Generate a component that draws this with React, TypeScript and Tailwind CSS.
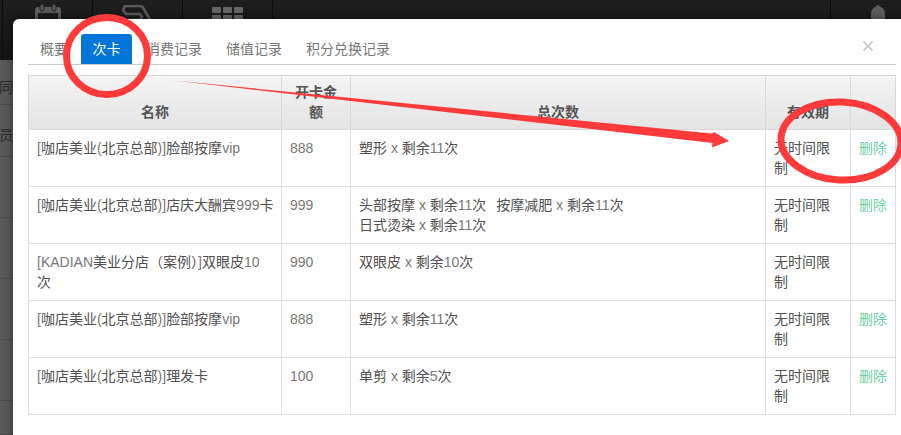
const cjk = "font-['Liberation_Sans','Noto_Sans_CJK_SC',sans-serif]";

type Row = { name: string; amount: string; items: string[][]; del: boolean };
const rows: Row[] = [
  { name: "[咖店美业(北京总部)]脸部按摩vip", amount: "888", items: [["塑形 x 剩余11次"]], del: true },
  { name: "[咖店美业(北京总部)]店庆大酬宾999卡", amount: "999", items: [["头部按摩 x 剩余11次", "按摩减肥 x 剩余11次"], ["日式烫染 x 剩余11次"]], del: true },
  { name: "[KADIAN美业分店（案例）]双眼皮10\n次", amount: "990", items: [["双眼皮 x 剩余10次"]], del: false },
  { name: "[咖店美业(北京总部)]脸部按摩vip", amount: "888", items: [["塑形 x 剩余11次"]], del: true },
  { name: "[咖店美业(北京总部)]理发卡", amount: "100", items: [["单剪 x 剩余5次"]], del: true },
];

function Top() {
  return (
    <div className="flex h-[60px] bg-gradient-to-b from-[#1e1e1e] to-[#141414]">
      <div className="w-[3px] border-r border-[#0c0c0c]" />
      <div className="w-[90px] border-r border-[#0c0c0c] flex justify-center pt-[4px]">
        <svg width="28" height="24" viewBox="0 0 28 24" fill="#5c5c5c">
          <rect x="1" y="3" width="26" height="21" rx="3" />
          <rect x="6" y="0" width="4" height="7" rx="2" stroke="#1c1c1c" />
          <rect x="18" y="0" width="4" height="7" rx="2" stroke="#1c1c1c" />
          <rect x="4" y="9" width="20" height="12" fill="#1c1c1c" />
        </svg>
      </div>
      <div className="w-[90px] border-r border-[#0c0c0c] flex justify-center pt-[5px]">
        <svg width="32" height="22" viewBox="0 0 32 22" fill="none" stroke="#5c5c5c" strokeWidth="2.500">
          <path d="M20 1H3L1 5l3 4h14l2 3-2 3H5" />
          <path d="M20 1l10 17" />
        </svg>
      </div>
      <div className="w-[90px] border-r border-[#0c0c0c] flex justify-center pt-[7px]">
        <div className="grid grid-cols-3 gap-[2px] h-fit">
          {[0, 1, 2, 3, 4, 5].map((i) => (
            <div key={i} className="w-[9px] h-[6px] rounded-[1px] bg-[#666666]" />
          ))}
        </div>
      </div>
      <div className="w-[558px] border-r border-[#0c0c0c]" />
      <div className="flex-1 flex pl-[38px] pt-[5px]">
        <svg width="18" height="18" viewBox="0 0 18 18" fill="#5e5e5e">
          <path d="M9 0c1 0 1.500.8 1.700 1.500C14 2.500 16 5 16 9v9H2V9c0-4 2-6.500 5.300-7.500C7.500.8 8 0 9 0z" />
        </svg>
      </div>
    </div>
  );
}

function Side() {
  const heights = ["h-[45px]", "h-[52px]", "h-[61px]", "h-[61px]", "h-[61px]", "h-[61px]", "h-[34px]"];
  const labels = ["同步", "员条", "", "", "", "", ""];
  return (
    <div className="flex-1 bg-gradient-to-r from-[#5a5a5a] to-[#7a7a7a]">
      {heights.map((h, i) => (
        <div key={i} className={`${h} border-b border-[#4c4c4c] flex items-center overflow-hidden whitespace-nowrap text-[14px] text-[#2a2a2a]`}>
          <span className="-ml-[1px] mt-[10px]">{labels[i]}</span>
        </div>
      ))}
    </div>
  );
}

function Mixed({ text }: { text: string }) {
  const parts = text.split(/([\u4e00-\u9fff（）]+)/);
  return (
    <>
      {parts.map((p, i) =>
        i % 2 === 1 ? <span key={i} className="text-[#505050]">{p}</span> : <span key={i}>{p}</span>
      )}
    </>
  );
}

export default function App() {
  return (
    <div className={`relative w-[901px] h-[435px] overflow-hidden flex flex-col bg-[#666666] ${cjk}`}>
      <Top />
      <Side />

      <div className="absolute left-[13px] top-[19px] w-[900px] h-[440px] bg-white rounded-[6px] shadow-[0_0_10px_rgba(0,0,0,0.5)] pl-[15px] pt-[15px] text-[14px] text-[#777777]">
        <div className="w-[868px] h-[31px] flex border-b border-[#cccccc] leading-[30px]">
          <div className="w-[52px] text-center">概要</div>
          <div className="ml-px w-[51px] text-center bg-[#0275d8] text-white rounded-t-[3px]">次卡</div>
          <div className="ml-[2px] px-[12px]">消费记录</div>
          <div className="px-[12px]">储值记录</div>
          <div className="px-[12px]">积分兑换记录</div>
        </div>
        <button className="absolute left-[849px] top-[17px] w-[12px] h-[20px] text-[#cccccc]">
          <svg width="12" height="12" viewBox="0 0 12 12" stroke="currentColor" strokeWidth="1.800">
            <path d="M1.500 1.500l9 9M10.500 1.500l-9 9" />
          </svg>
        </button>

        <table className="mt-[10px] w-[867px] table-fixed border-collapse leading-[20px]">
          <colgroup>
            <col className="w-[253px]" />
            <col className="w-[69px]" />
            <col className="w-[415px]" />
            <col className="w-[85px]" />
            <col className="w-[45px]" />
          </colgroup>
          <thead>
            <tr className="h-[54px] bg-gradient-to-b from-[#f4f4f4] to-[#e4e4e4] text-[#555555]">
              {["名称", "开卡金额", "总次数", "有效期", ""].map((h, i) => (
                <th key={i} className="border border-[#d8d8d8] px-[8px] pb-[7px] pt-0 align-bottom font-bold text-center">{h}</th>
              ))}
            </tr>
          </thead>
          <tbody>
            {rows.map((r, i) => (
              <tr key={i} className="h-[57px]">
                <td className="border border-[#dddddd] pl-[8px] pr-[5px] pt-[8px] align-top break-all whitespace-pre-line"><Mixed text={r.name} /></td>
                <td className="border border-[#dddddd] px-[8px] pt-[8px] align-top">{r.amount}</td>
                <td className="border border-[#dddddd] px-[8px] pt-[8px] align-top">
                  {r.items.map((line, j) => (
                    <div key={j} className="flex gap-[10px]">
                      {line.map((t, k) => <span key={k}><Mixed text={t} /></span>)}
                    </div>
                  ))}
                </td>
                <td className="border border-[#dddddd] px-[8px] pt-[8px] align-top text-[#505050]">无时间限制</td>
                <td className="border border-[#dddddd] px-[8px] pt-[8px] align-top text-[#6fcfa5]">{r.del ? "删除" : ""}</td>
              </tr>
            ))}
          </tbody>
        </table>
      </div>

      <svg className="absolute inset-0 pointer-events-none" width="901" height="435" viewBox="0 0 901 435" fill="none">
        <ellipse cx="107" cy="56" rx="40.500" ry="38.500" stroke="#ff3a3a" strokeWidth="7" />
        <ellipse cx="841" cy="141" rx="60" ry="39" stroke="#ff3a3a" strokeWidth="7" transform="rotate(3 841 141)" />
        <path d="M174 80.500L712 133.500L714 132L729 141L712 147.500L712.500 143Z" fill="#ff3a3a" />
      </svg>
    </div>
  );
}
